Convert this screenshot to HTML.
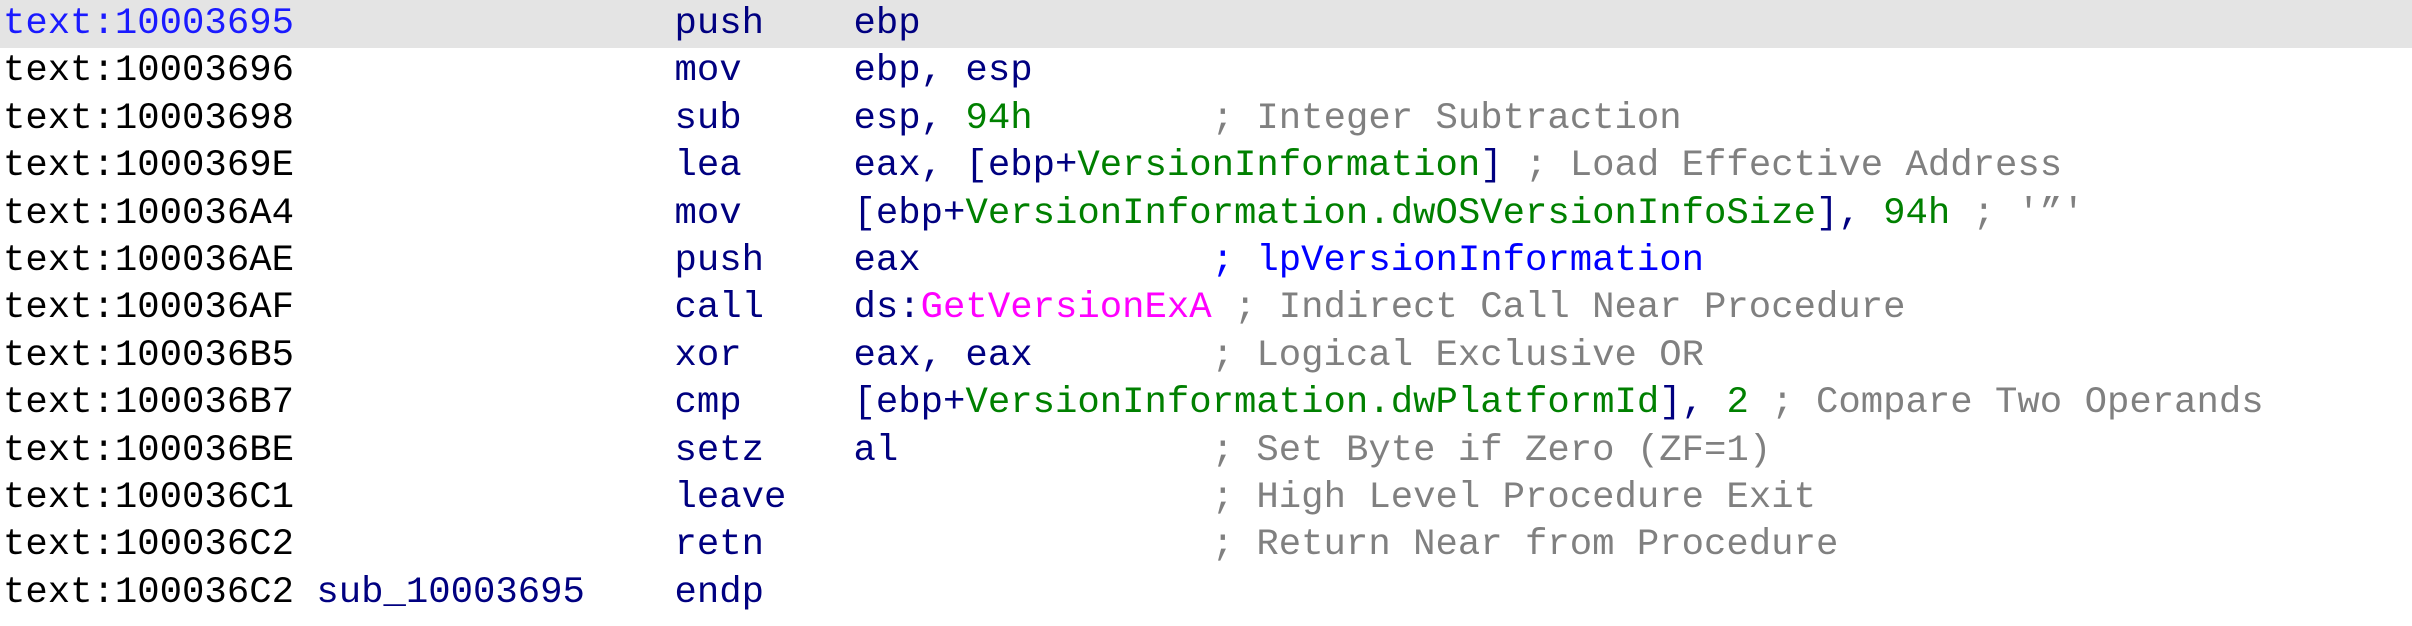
<!DOCTYPE html>
<html><head><meta charset="utf-8"><style>
html,body{margin:0;padding:0;background:#fff;width:2412px;height:626px;overflow:hidden}
.hl{position:absolute;left:0;top:0;width:2412px;height:48px;background:#e4e4e4}
pre{position:absolute;left:3px;top:1px;margin:0;font-family:"Liberation Mono",monospace;font-size:37.3px;line-height:47.4px;color:#000;white-space:pre}
.m{color:#000080}.g{color:#008000}.c{color:#808080}.b{color:#0000ff}.p{color:#ff00ff}.a{color:#1a1aff}
</style></head><body>
<div class="hl"></div>
<pre><span class="a">text:10003695</span>                 <span class="m">push    ebp</span>
text:10003696                 <span class="m">mov     ebp, esp</span>
text:10003698                 <span class="m">sub     esp, </span><span class="g">94h</span>        <span class="c">; Integer Subtraction</span>
text:1000369E                 <span class="m">lea     eax, [ebp+</span><span class="g">VersionInformation</span><span class="m">]</span> <span class="c">; Load Effective Address</span>
text:100036A4                 <span class="m">mov     [ebp+</span><span class="g">VersionInformation.dwOSVersionInfoSize</span><span class="m">], </span><span class="g">94h</span> <span class="c">; '”'</span>
text:100036AE                 <span class="m">push    eax</span>             <span class="b">; lpVersionInformation</span>
text:100036AF                 <span class="m">call    ds:</span><span class="p">GetVersionExA</span> <span class="c">; Indirect Call Near Procedure</span>
text:100036B5                 <span class="m">xor     eax, eax</span>        <span class="c">; Logical Exclusive OR</span>
text:100036B7                 <span class="m">cmp     [ebp+</span><span class="g">VersionInformation.dwPlatformId</span><span class="m">], </span><span class="g">2</span> <span class="c">; Compare Two Operands</span>
text:100036BE                 <span class="m">setz    al</span>              <span class="c">; Set Byte if Zero (ZF=1)</span>
text:100036C1                 <span class="m">leave</span>                   <span class="c">; High Level Procedure Exit</span>
text:100036C2                 <span class="m">retn</span>                    <span class="c">; Return Near from Procedure</span>
text:100036C2 <span class="m">sub_10003695</span>    <span class="m">endp</span></pre>
</body></html>
